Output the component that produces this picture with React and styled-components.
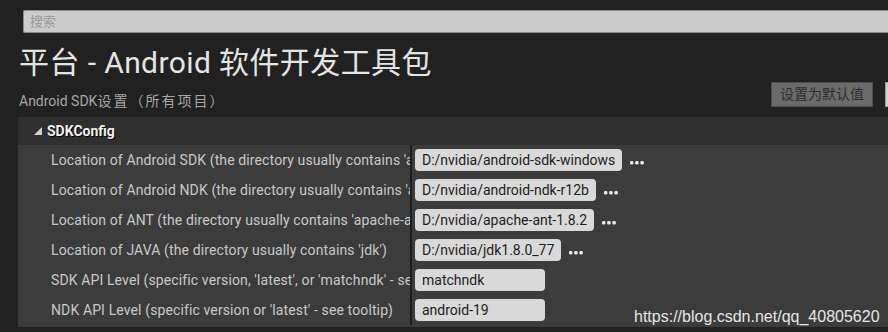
import styled, { createGlobalStyle } from 'styled-components';

const GlobalStyle = createGlobalStyle`
  html, body {
    margin: 0;
    padding: 0;
    background: #212121;
  }
  body {
    font-family: Roboto, "Noto Sans CJK SC", sans-serif;
  }
`

const rows = [
  { label: "Location of Android SDK (the directory usually contains 'android-sdk-')", value: 'D:/nvidia/android-sdk-windows', browse: true },
  { label: "Location of Android NDK (the directory usually contains 'android-ndk-')", value: 'D:/nvidia/android-ndk-r12b', browse: true },
  { label: "Location of ANT (the directory usually contains 'apache-ant-')", value: 'D:/nvidia/apache-ant-1.8.2', browse: true },
  { label: "Location of JAVA (the directory usually contains 'jdk')", value: 'D:/nvidia/jdk1.8.0_77', browse: true },
  { label: "SDK API Level (specific version, 'latest', or 'matchndk' - see tooltip)", value: 'matchndk', width: 130 },
  { label: "NDK API Level (specific version or 'latest' - see tooltip)", value: 'android-19', width: 130 },
]

const Dots = () => (
  <svg width="14" height="4" viewBox="0 0 14 4">
    <rect x="0" y="0" width="3.4" height="3.4" rx="1.2" fill="#e8e8e8" />
    <rect x="5.2" y="0" width="3.4" height="3.4" rx="1.2" fill="#e8e8e8" />
    <rect x="10.4" y="0" width="3.4" height="3.4" rx="1.2" fill="#e8e8e8" />
  </svg>
)

export default function App() {
  return (
    <Page>
      <GlobalStyle />
      <Search>搜索</Search>
      <Title>平台 - Android 软件开发工具包</Title>
      <TopRow>
        <Subtitle>
          Android SDK<SubtitleCjk>设置（所有项目）</SubtitleCjk>
        </Subtitle>
        <Buttons>
          <DefaultButton>设置为默认值</DefaultButton>
          <ExportButton>导出</ExportButton>
        </Buttons>
      </TopRow>
      <Panel>
        <PanelHeader>
          <Arrow />
          SDKConfig
        </PanelHeader>
        {rows.map((r) => (
          <Row key={r.label}>
            <Label>{r.label}</Label>
            <ValueCell>
              <ValueBox $width={r.width}>{r.value}</ValueBox>
              {r.browse && (
                <Browse>
                  <Dots />
                </Browse>
              )}
            </ValueCell>
          </Row>
        ))}
        <Watermark>https://blog.csdn.net/qq_40805620</Watermark>
      </Panel>
    </Page>
  )
}

const Page = styled.div`
  width: 888px;
  height: 332px;
  overflow: hidden;
  padding: 10px 0 0 18px;
  box-sizing: border-box;
  background: #212121;
`

const Search = styled.div`
  margin-left: 5px;
  height: 23px;
  box-sizing: border-box;
  background: #cccccc;
  border: 1px solid #8a8a8a;
  border-right: none;
  border-radius: 2px 0 0 2px;
  padding-left: 6px;
  font-size: 13px;
  line-height: 21px;
  color: #9a9a9a;
`

const Title = styled.h1`
  margin: 12px 0 0 1px;
  font-size: 30px;
  font-weight: 400;
  letter-spacing: 0.4px;
  line-height: 36px;
  color: #e4e4e4;
  white-space: nowrap;
`

const TopRow = styled.div`
  display: flex;
  align-items: flex-end;
  justify-content: space-between;
  margin-right: -60px;
  margin-top: 1px;
`

const Subtitle = styled.div`
  font-size: 14px;
  color: #a6a6a6;
  line-height: 18px;
  padding-left: 1px;
  margin-bottom: -3px;
`

const SubtitleCjk = styled.span`
  letter-spacing: 2px;
`

const Buttons = styled.div`
  display: flex;
  gap: 12px;
`

const DefaultButton = styled.div`
  width: 102px;
  height: 25px;
  box-sizing: border-box;
  background: #6b6b6b;
  border: 1px solid #4e4e4e;
  font-size: 14px;
  line-height: 23px;
  text-align: center;
  color: #2e2e2e;
`

const ExportButton = styled(DefaultButton)`
  width: 63px;
  background: #cfcfcf;
  border-color: #9a9a9a;
`

const Panel = styled.div`
  position: relative;
  margin-top: 10px;
  background: #3c3c3c;
  border-top-left-radius: 3px;
  padding-bottom: 2px;
`

const PanelHeader = styled.div`
  display: flex;
  align-items: center;
  height: 28px;
  background: #2f2f2f;
  border-top-left-radius: 3px;
  padding-left: 16px;
  font-size: 14px;
  font-weight: 700;
  color: #f0f0f0;
  text-shadow: 1px 1px 1px #000;
`

const Arrow = styled.span`
  width: 0;
  height: 0;
  margin-right: 5px;
  border-left: 8px solid transparent;
  border-bottom: 8px solid #d0d0d0;
`

const Row = styled.div`
  display: grid;
  grid-template-columns: 394px 1fr;
  height: 30px;
`

const Label = styled.div`
  padding-left: 33px;
  padding-right: 1px;
  font-size: 14px;
  letter-spacing: 0.12px;
  line-height: 30px;
  color: #c8c8c8;
  white-space: nowrap;
  overflow: hidden;
  border-right: 2px solid #1e1e1e;
`

const ValueCell = styled.div`
  display: flex;
  align-items: center;
  padding-left: 3px;
`

const ValueBox = styled.div`
  height: 22px;
  box-sizing: border-box;
  ${(p) => (p.$width ? `width: ${p.$width}px;` : '')}
  padding: 0 7px;
  background: #d9d9d9;
  border-radius: 4px;
  font-size: 14px;
  line-height: 22px;
  color: #1e1e1e;
  white-space: nowrap;
`

const Browse = styled.div`
  display: flex;
  margin: 6px 0 0 8px;
`

const Watermark = styled.div`
  position: absolute;
  left: 616px;
  bottom: 1px;
  font-family: Arial, "Liberation Sans", sans-serif;
  font-size: 16px;
  color: #e6e6e6;
  white-space: nowrap;
`
